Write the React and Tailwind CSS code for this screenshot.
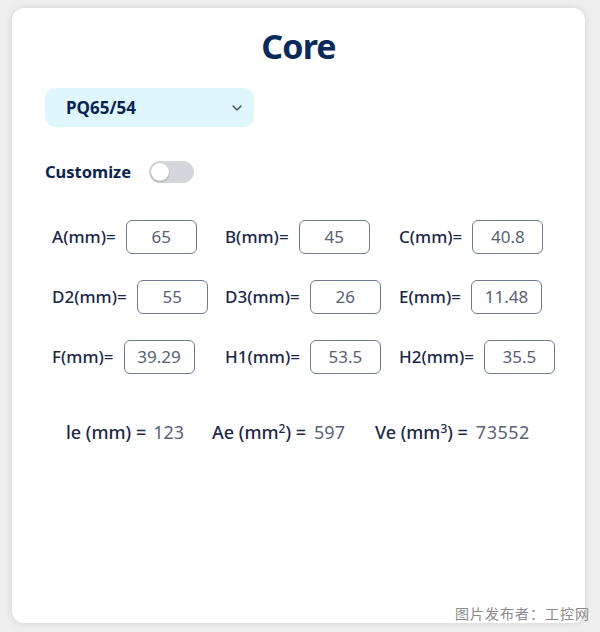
import React from 'react';

const dims = [
  [
    { label: 'A(mm)=', value: '65' },
    { label: 'B(mm)=', value: '45' },
    { label: 'C(mm)=', value: '40.8' },
  ],
  [
    { label: 'D2(mm)=', value: '55' },
    { label: 'D3(mm)=', value: '26' },
    { label: 'E(mm)=', value: '11.48' },
  ],
  [
    { label: 'F(mm)=', value: '39.29' },
    { label: 'H1(mm)=', value: '53.5' },
    { label: 'H2(mm)=', value: '35.5' },
  ],
];

function DimField({ label, value }) {
  return (
    <div className="flex items-center gap-[10px]">
      <span className="text-[17px] font-medium text-[#1c2848]">{label}</span>
      <div className="w-[71px] h-[34px] rounded-md border-[1.5px] border-[#6f7c91] flex items-center justify-center text-[17px] text-[#586274]">
        {value}
      </div>
    </div>
  );
}

export default function App() {
  return (
    <div
      className="relative w-[600px] h-[632px] bg-[#efefef] overflow-hidden pt-2 pl-3"
      style={{ fontFamily: '"Noto Sans", "Noto Sans CJK SC", sans-serif' }}
    >
      <div className="w-[573px] h-[615px] bg-white rounded-xl shadow-[0_0_8px_rgba(0,0,0,0.12)] flex flex-col">
        {/* Header */}
        <h1 className="text-center text-[34px] leading-none font-bold text-[#0a2a5c] pt-[21px] tracking-tight">Core</h1>

        {/* Core selector */}
        <div className="mt-[25px] ml-[33px] w-[209px] h-[39px] rounded-[10px] bg-[#dff6fd] flex items-center justify-between pl-[21px] pr-[11px]">
          <span className="text-[17px] font-bold text-[#0b2350]">PQ65/54</span>
          <svg width="12" height="8" viewBox="0 0 12 8" fill="none" stroke="#3b4a66" strokeWidth="1.4" strokeLinecap="round" strokeLinejoin="round">
            <path d="M2 2l4 4 4-4" />
          </svg>
        </div>

        {/* Customize toggle */}
        <div className="mt-[33px] ml-[33px] flex items-center gap-[18px]">
          <span className="text-[16.5px] font-bold text-[#0b2350]">Customize</span>
          <div className="w-[45px] h-[22px] rounded-full bg-[#d4d6dc] flex items-center pl-[2px]">
            <div className="w-[18px] h-[18px] rounded-full bg-white shadow-[0_1px_2px_rgba(0,0,0,0.25)]" />
          </div>
        </div>

        {/* Dimension inputs */}
        <div className="mt-[35px] ml-[40px] flex flex-col gap-[26px]">
          {dims.map((row, i) => (
            <div key={i} className="grid grid-cols-[173px_174px_170px]">
              {row.map((d) => (
                <DimField key={d.label} label={d.label} value={d.value} />
              ))}
            </div>
          ))}
        </div>

        {/* Computed parameters */}
        <div className="mt-[45px] ml-[54px] flex items-baseline text-[18px]">
          <span className="font-medium text-[#1c2848]">le (mm) =</span>
          <span className="ml-[7px] text-[#586274]">123</span>
          <span className="ml-[28px] font-medium text-[#1c2848]">
            Ae (mm<sup className="text-[12px]">2</sup>) =
          </span>
          <span className="ml-[8px] text-[#586274]">597</span>
          <span className="ml-[30px] font-medium text-[#1c2848]">
            Ve (mm<sup className="text-[12px]">3</sup>) =
          </span>
          <span className="ml-[8px] text-[#586274] tracking-[0.5px]">73552</span>
        </div>
      </div>

      <span className="absolute right-[10px] bottom-[8px] text-[14px] text-[#8a8a8a] tracking-[1px]">图片发布者：工控网</span>
    </div>
  );
}
